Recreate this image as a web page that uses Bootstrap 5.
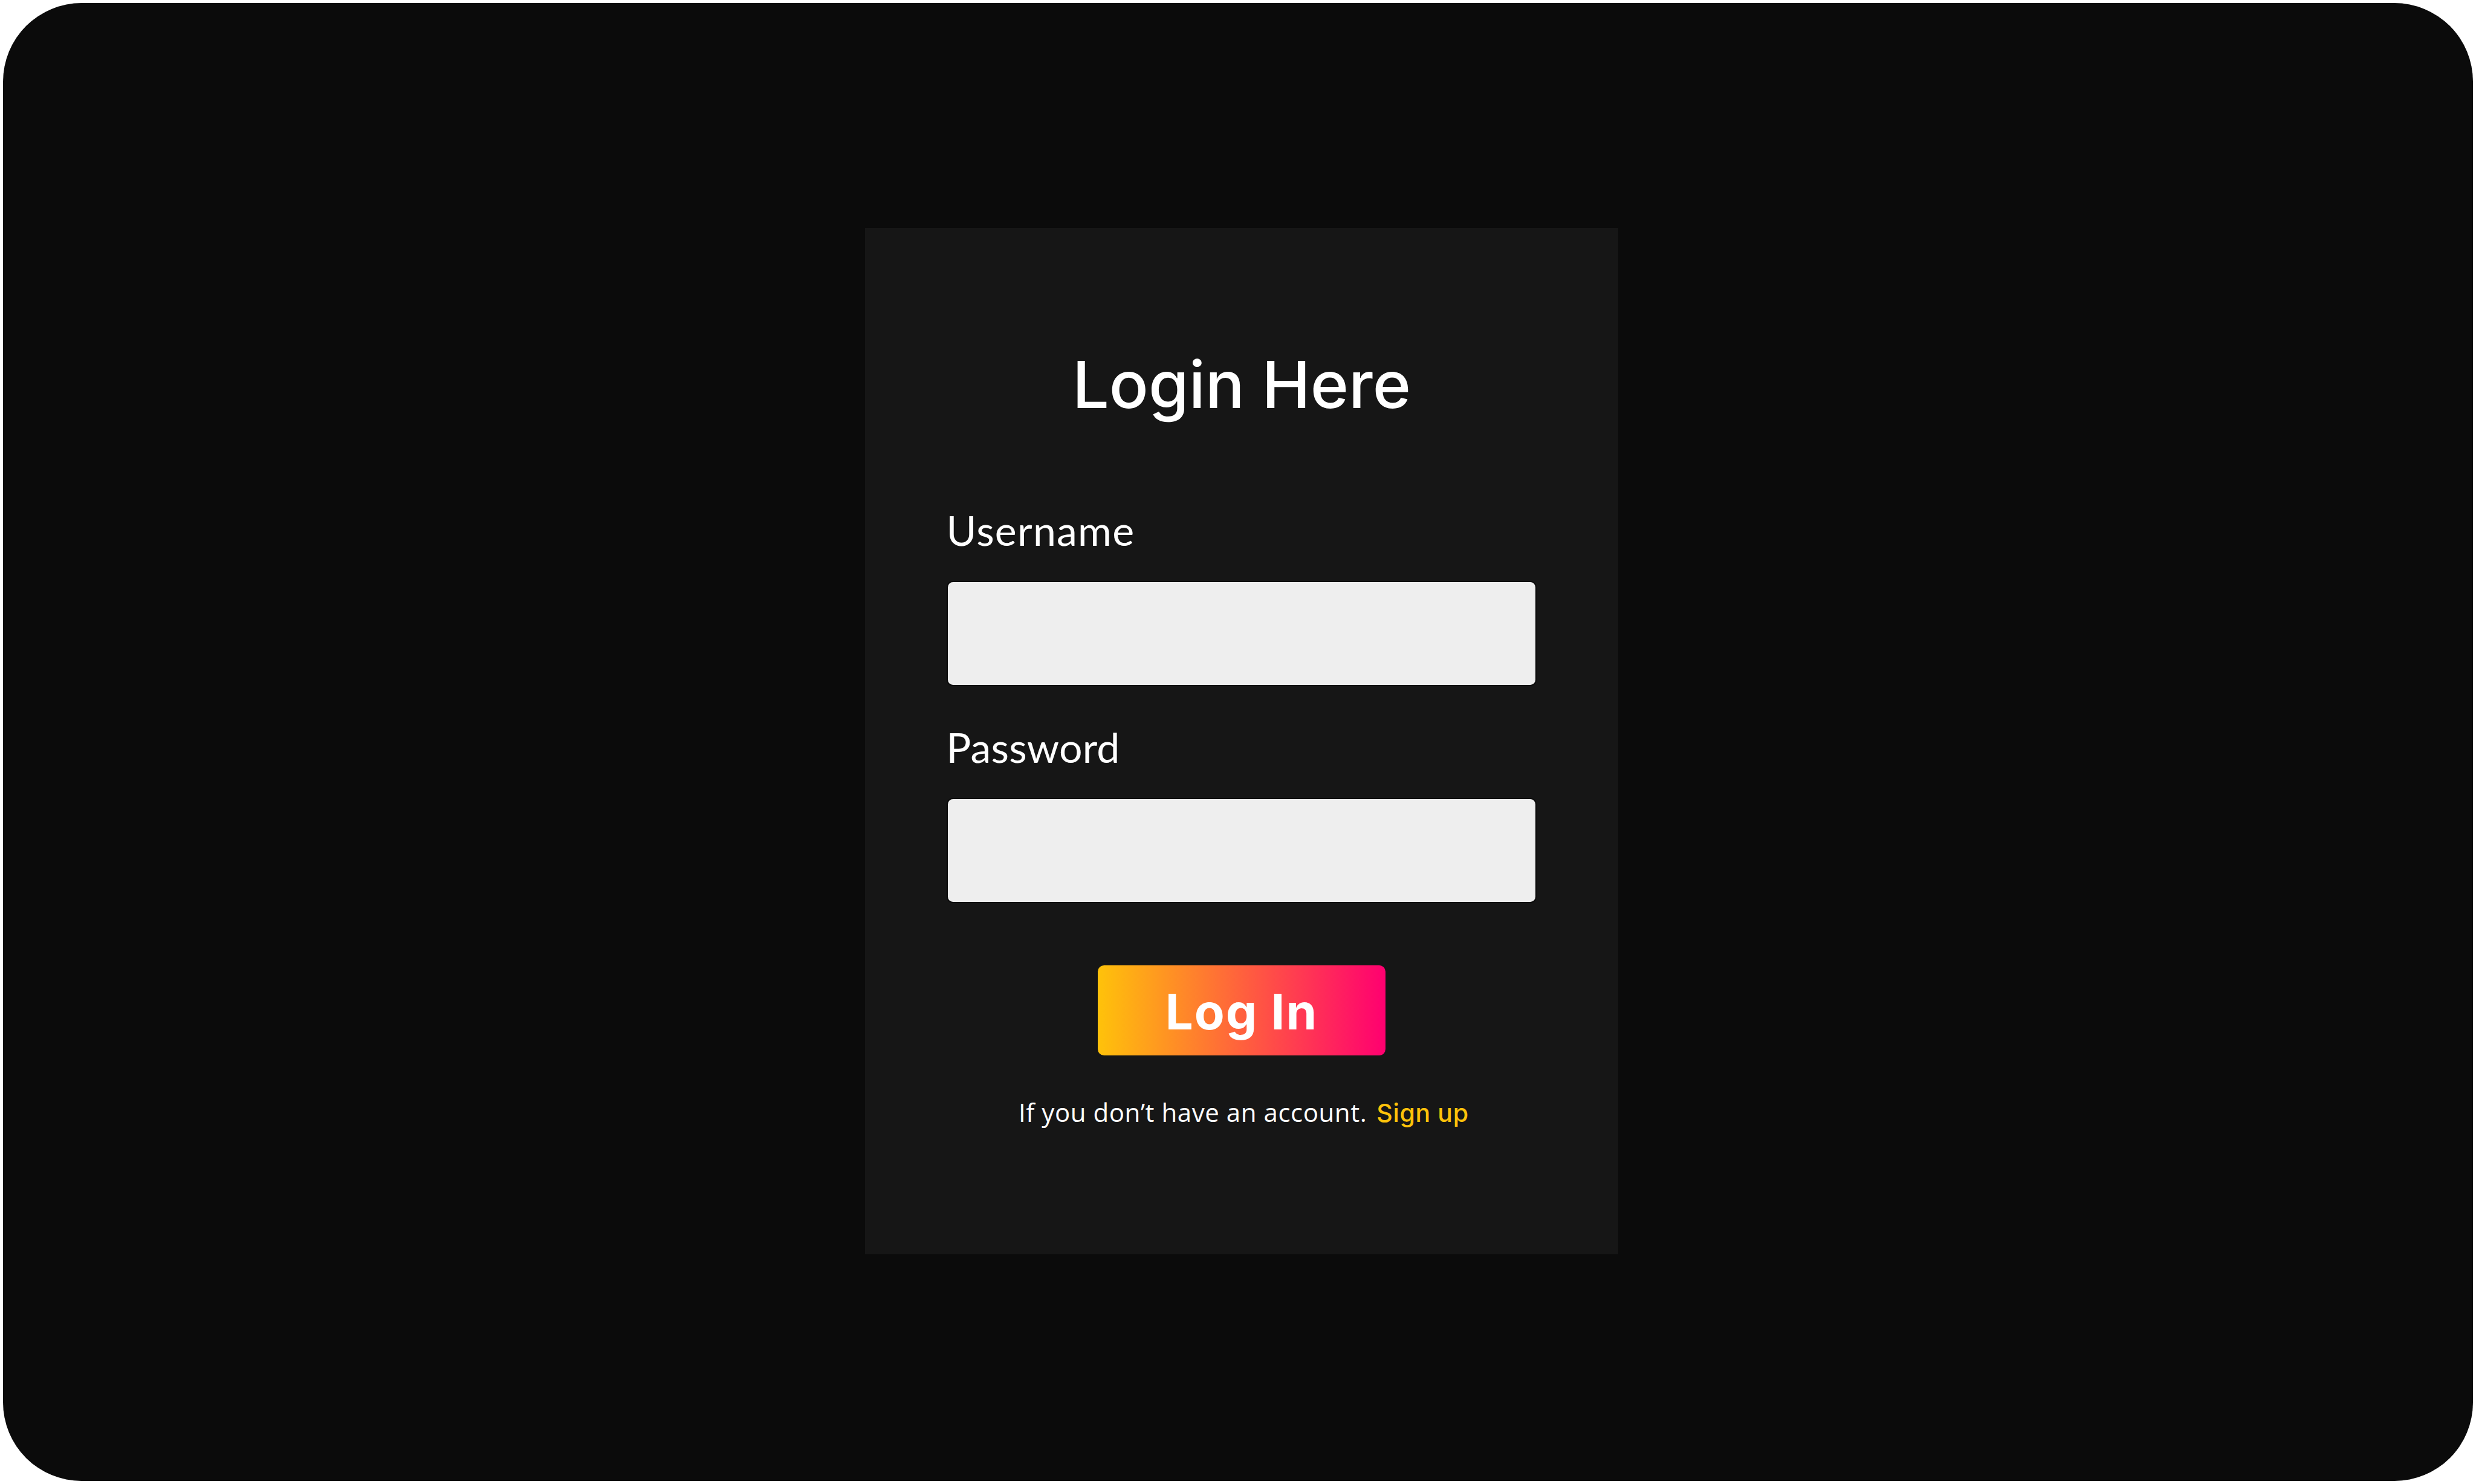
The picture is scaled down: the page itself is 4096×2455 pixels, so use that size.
<!DOCTYPE html>
<html lang="en">
<head>
  <meta charset="UTF-8">
  <title>Login</title>
  <meta name="viewport" content="width=device-width, initial-scale=1">
  <link href="https://cdn.jsdelivr.net/npm/bootstrap@5.3.0/dist/css/bootstrap.min.css" rel="stylesheet">
  <style>
    body { background: #fff; padding: 5.28px; font-family: "Open Sans", sans-serif; }
    .login-page { background: #0b0b0b; border-radius: 130px; padding-top: 372.2px; padding-left: 12px; }
    .login-card { width: 1246px; height: 1697.5px; background: #161616; padding: 194px 134.6px 0; }
    .login-title { font-family: Inter, sans-serif; font-size: 107.8px; font-weight: 500; line-height: 130px; margin-bottom: 130.4px; }
    .login-card .form-label { font-family: Lato, sans-serif; font-size: 68px; line-height: 90px; letter-spacing: .2px; margin: 0 0 39px; }
    .login-card .field-gap .form-label { letter-spacing: 1.2px; }
    .login-card .form-control { height: 174.2px; background: #eee; border: 2.64px solid #0b0b0b; border-radius: 10.5px; }
    .field-gap { margin-bottom: 55.8px; }
    .btn-login, .btn-login:hover { width: 475.2px; height: 148.8px; margin-top: 103px; padding: 4px 0 0; border: 0; border-radius: 10.5px; color: #fff; background: linear-gradient(90deg, #ffc20a, #ff0070); font-family: Inter, sans-serif; font-size: 81.5px; font-weight: 700; line-height: 1.2; letter-spacing: 2px; }
    .signup-row { margin-top: 65.7px; padding-left: 6.6px; gap: 16px; font-size: 42px; line-height: 56px; letter-spacing: .55px; }
    .signup-row a { color: #ffc20a; font-family: Inter, sans-serif; font-size: 41px; font-weight: 500; letter-spacing: .65px; }
  </style>
</head>
<body class="vh-100">
<div class="login-page h-100 d-flex justify-content-center align-items-start">
  <form class="login-card card border-0 rounded-0 text-white d-flex flex-column">
    <h1 class="login-title text-center text-nowrap">Login Here</h1>

    <div class="field-gap">
      <label for="username" class="form-label d-block">Username</label>
      <input type="text" class="form-control" id="username">
    </div>
    <div>
      <label for="password" class="form-label d-block">Password</label>
      <input type="password" class="form-control" id="password">
    </div>

    <button type="button" class="btn btn-login align-self-center">Log In</button>

    <div class="signup-row d-flex justify-content-center align-items-baseline text-nowrap">
      <span>If you don’t have an account.</span>
      <a href="#" class="text-decoration-none">Sign up</a>
    </div>
  </form>
</div>
<script src="https://cdn.jsdelivr.net/npm/bootstrap@5.3.0/dist/js/bootstrap.bundle.min.js"></script>
</body>
</html>
